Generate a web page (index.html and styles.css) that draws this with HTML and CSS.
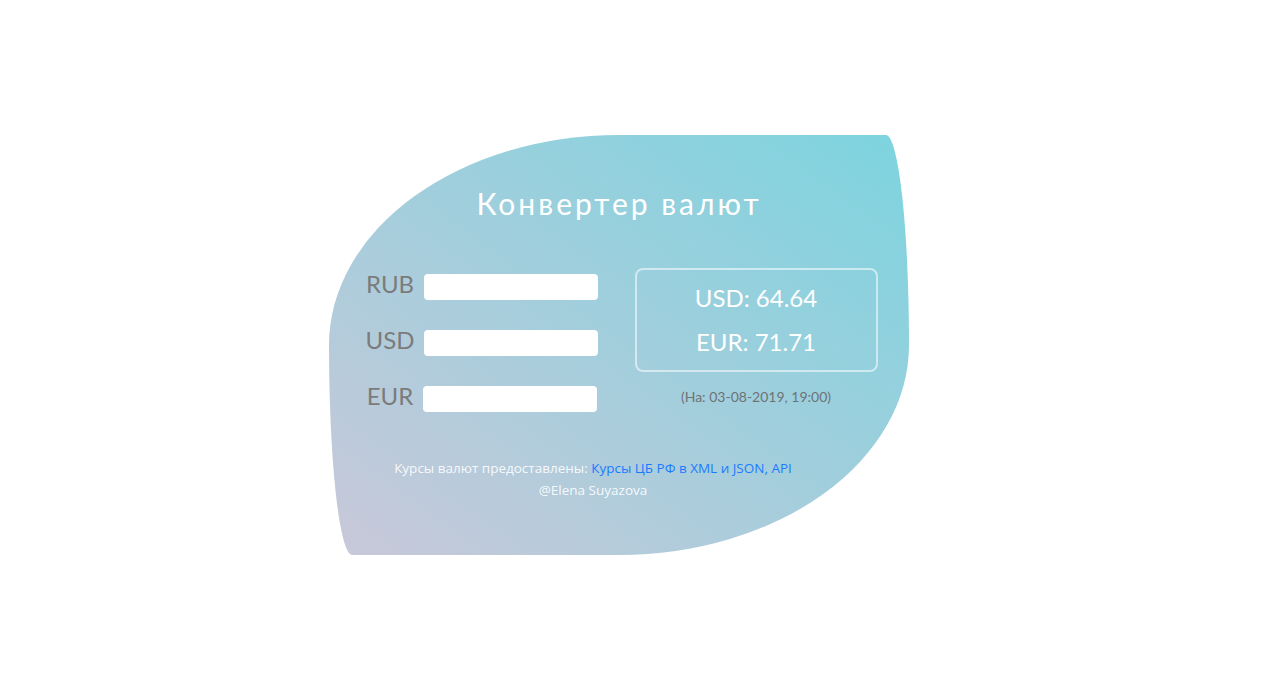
FILE: index.html
```html
<!DOCTYPE html>
<html>
    <head>
    <meta charset="utf-8">
    <link rel="stylesheet" href="styles.css">
    </head>
    <body>
        <div class="card">
            <h1 class="title">Конвертер валют</h1>
            <div class="columns">
                <div class="inputs">
                    <div class="row">
                        <label class="currency" for="rub">RUB</label>
                        <input type="text" id="rub" class="amount">
                    </div>
                    <div class="row">
                        <label class="currency" for="usd">USD</label>
                        <input type="text" id="usd" class="amount">
                    </div>
                    <div class="row">
                        <label class="currency" for="eur">EUR</label>
                        <input type="text" id="eur" class="amount">
                    </div>
                </div>
                <div class="rates">
                    <div class="rates-box">
                        <div class="rate">USD: 64.64</div>
                        <div class="rate">EUR: 71.71</div>
                    </div>
                    <div class="date">(На: 03-08-2019, 19:00)</div>
                </div>
            </div>
            <div class="footer">
                Курсы валют предоставлены: <a href="#" class="link">Курсы ЦБ РФ в XML и JSON, API</a><br>
                @Elena Suyazova
            </div>
        </div>
    </body>
</html>
```

FILE: styles.css
```css
body{
  margin:0;
  background:white;
}
.card{
  width:580px;
  height:420px;
  margin:135px 0 0 329px;
  box-sizing:border-box;
  padding:0 16px;
  background:linear-gradient(to top right, #c9c8d9, #7cd4df);
  border-radius:50% 4% 50% 4% / 50%;
  font-family:Lato, "Noto Sans", sans-serif;
}
.title{
  margin:0;
  padding-top:50px;
  height:45px;
  text-align:center;
  color:white;
  font-weight:400;
  font-size:30px;
  letter-spacing:3px;
}
.columns{
  display:flex;
  margin-top:38px;
}
.inputs, .rates{
  flex:1;
  display:flex;
  flex-direction:column;
  align-items:center;
}
.inputs{
  padding-top:6px;
}
.row{
  display:flex;
  align-items:center;
  height:26px;
  margin-bottom:30px;
}
.currency{
  font-size:24px;
  line-height:26px;
  color:#7b7b7b;
  margin:0 10px 6px 0;
}
.amount{
  width:174px;
  height:26px;
  box-sizing:border-box;
  border:none;
  border-radius:4px;
  background:white;
}
.rates-box{
  width:243px;
  height:104px;
  box-sizing:border-box;
  border:2px solid rgba(255,255,255,0.55);
  border-radius:8px;
  display:flex;
  flex-direction:column;
  justify-content:center;
  align-items:center;
  gap:16px;
}
.rate{
  color:white;
  font-size:24px;
  line-height:28px;
}
.date{
  margin-top:16px;
  font-size:14px;
  color:#6d7377;
}
.footer{
  margin-top:15px;
  margin-right:52px;
  text-align:center;
  font-family:"Open Sans", "Noto Sans", sans-serif;
  font-size:13.5px;
  line-height:22px;
  color:rgba(255,255,255,0.9);
}
.link{
  color:#1a7bff;
  text-decoration:none;
}
```
